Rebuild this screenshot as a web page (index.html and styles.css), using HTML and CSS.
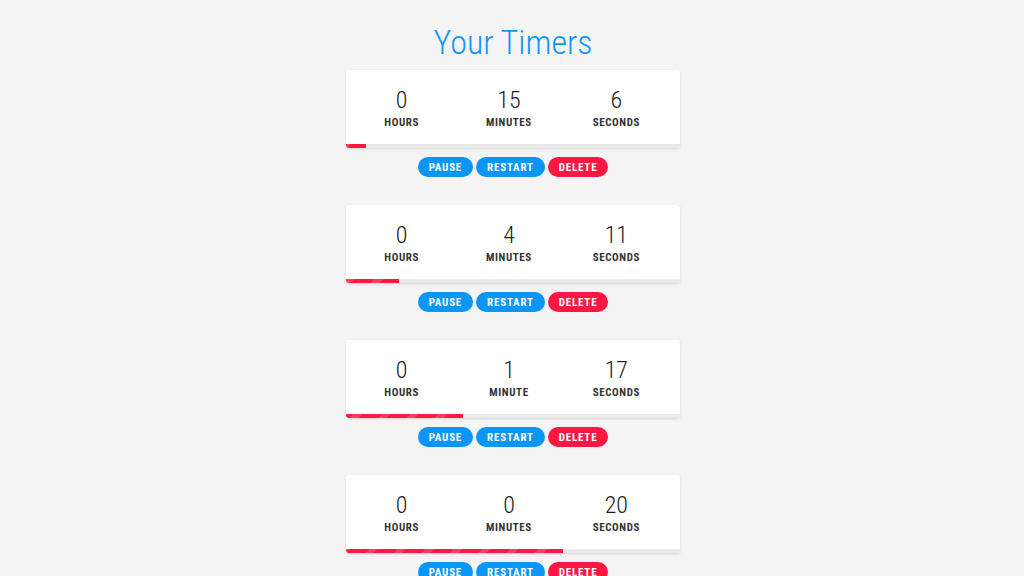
FILE: index.html
```html
<!DOCTYPE html>
<html lang="en">
<head>
<meta charset="utf-8">
<title>Your Timers</title>
<link rel="stylesheet" href="styles.css">
</head>
<body>
<main class="page">
  <h1 class="title">Your Timers</h1>
  <section class="timer">
    <div class="card">
      <div class="units">
        <div class="unit"><span class="num">0</span><span class="label">Hours</span></div>
        <div class="unit"><span class="num">15</span><span class="label">Minutes</span></div>
        <div class="unit"><span class="num">6</span><span class="label">Seconds</span></div>
      </div>
      <div class="track"><div class="bar" style="width:6%"></div></div>
    </div>
    <div class="actions">
      <button class="btn blue">Pause</button>
      <button class="btn blue">Restart</button>
      <button class="btn red">Delete</button>
    </div>
  </section>
  <section class="timer">
    <div class="card">
      <div class="units">
        <div class="unit"><span class="num">0</span><span class="label">Hours</span></div>
        <div class="unit"><span class="num">4</span><span class="label">Minutes</span></div>
        <div class="unit"><span class="num">11</span><span class="label">Seconds</span></div>
      </div>
      <div class="track"><div class="bar" style="width:16%"></div></div>
    </div>
    <div class="actions">
      <button class="btn blue">Pause</button>
      <button class="btn blue">Restart</button>
      <button class="btn red">Delete</button>
    </div>
  </section>
  <section class="timer">
    <div class="card">
      <div class="units">
        <div class="unit"><span class="num">0</span><span class="label">Hours</span></div>
        <div class="unit"><span class="num">1</span><span class="label">Minute</span></div>
        <div class="unit"><span class="num">17</span><span class="label">Seconds</span></div>
      </div>
      <div class="track"><div class="bar" style="width:35%"></div></div>
    </div>
    <div class="actions">
      <button class="btn blue">Pause</button>
      <button class="btn blue">Restart</button>
      <button class="btn red">Delete</button>
    </div>
  </section>
  <section class="timer">
    <div class="card">
      <div class="units">
        <div class="unit"><span class="num">0</span><span class="label">Hours</span></div>
        <div class="unit"><span class="num">0</span><span class="label">Minutes</span></div>
        <div class="unit"><span class="num">20</span><span class="label">Seconds</span></div>
      </div>
      <div class="track"><div class="bar" style="width:65%"></div></div>
    </div>
    <div class="actions">
      <button class="btn blue">Pause</button>
      <button class="btn blue">Restart</button>
      <button class="btn red">Delete</button>
    </div>
  </section>
</main>
</body>
</html>
```
FILE: styles.css
```css
* { box-sizing: border-box; }
html, body {
  margin: 0;
  padding: 0;
  background: #f4f4f4;
  font-family: "Roboto Condensed", Roboto, "Liberation Sans", Arial, sans-serif;
  color: #333;
}
.page {
  width: 336px;
  margin: 0 auto;
  padding-top: 22px;
  padding-left: 2px;
  display: flex;
  flex-direction: column;
}
.title {
  margin: 0 0 8px;
  font-size: 34px;
  line-height: 40px;
  font-weight: 300;
  color: #1496f4;
  text-align: center;
}
.timer {
  display: flex;
  flex-direction: column;
  margin-bottom: 28px;
}
.card {
  background: #fff;
  border-radius: 3px;
  box-shadow: 0 1px 3px rgba(0,0,0,0.12);
  overflow: hidden;
}
.units {
  display: grid;
  grid-template-columns: repeat(3, 1fr);
  padding: 16px 10px 15px 2px;
}
.unit {
  display: flex;
  flex-direction: column;
  align-items: center;
  gap: 2px;
}
.num {
  font-size: 24px;
  line-height: 28px;
  font-weight: 300;
  color: #222;
}
.label {
  font-size: 11px;
  line-height: 13px;
  font-weight: 700;
  text-transform: uppercase;
  letter-spacing: 0.6px;
  color: #333;
}
.track {
  height: 4px;
  background: #e9e9e9;
}
.bar {
  height: 100%;
  background: repeating-linear-gradient(-45deg, #ff1744 0 14px, #ff3d60 14px 20px);
}
.actions {
  display: flex;
  justify-content: center;
  gap: 3px;
  margin-top: 9px;
}
.btn {
  height: 20px;
  border: 0;
  border-radius: 10px;
  padding: 0 11px;
  font-family: "Roboto Condensed", Roboto, "Liberation Sans", Arial, sans-serif;
  font-size: 11px;
  font-weight: 700;
  letter-spacing: 0.8px;
  text-transform: uppercase;
  color: #fff;
  cursor: pointer;
}
.blue { background: #0a96f7; }
.red { background: #ff1744; }
```
